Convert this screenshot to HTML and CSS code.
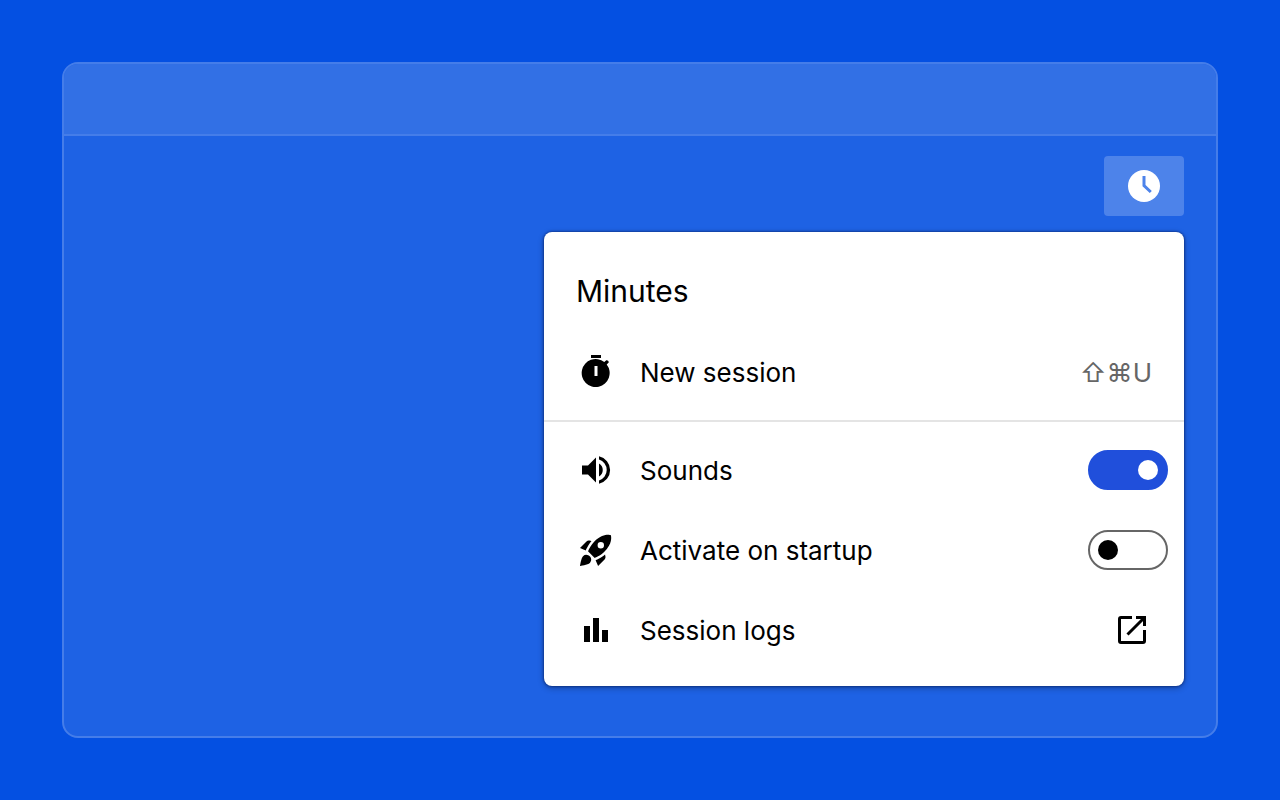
FILE: index.html
```html
<!DOCTYPE html>
<html lang="en">
<head>
<meta charset="utf-8">
<meta name="viewport" content="width=device-width, initial-scale=1">
<title>Minutes</title>
<link rel="stylesheet" href="styles.css">
</head>
<body>
<main class="window">
  <header class="titlebar"></header>
  <div class="content">
    <button class="tray" type="button" aria-label="Minutes">
      <svg class="tray-icon" viewBox="0 0 32 32" aria-hidden="true"><circle cx="16" cy="16" r="16" fill="#fff"/><path d="M16 6v9.500l6.800 6.500" fill="none" stroke="#4d83ea" stroke-width="3"/></svg>
    </button>
    <section class="popup">
      <h1 class="title">Minutes</h1>
      <button class="row" type="button">
        <svg class="icon" viewBox="0 0 40 40" aria-hidden="true"><path d="M15 3h10v3H15zM30.700 12.400l2-2a2 2 0 0 0-2.400-2.200l-2 1.800A14 14 0 1 0 30.700 12.400zM21.500 24h-3V14h3z"/></svg>
        <span class="label">New session</span>
        <kbd class="keys">⇧⌘U</kbd>
      </button>
      <hr class="divider">
      <label class="row">
        <svg class="icon" viewBox="0 0 40 40" aria-hidden="true"><path d="M6 15.500v9h6l8 8v-25l-8 8zM23 13.500v13a7.500 7.500 0 0 0 0-13zM23 6.300v3.200a11 11 0 0 1 0 21v3.200a14 14 0 0 0 0-27.400z"/></svg>
        <span class="label">Sounds</span>
        <input class="toggle" type="checkbox" role="switch" checked>
      </label>
      <label class="row">
        <svg class="icon" viewBox="-0.500 -0.500 25 25" aria-hidden="true"><path d="M9.190 6.350c-2.040 2.290-3.440 5.580-3.570 5.890L2 10.690l4.050-4.050c.47-.47 1.150-.68 1.810-.55l1.330.26zM11.170 17s3.740-1.550 5.890-3.700c5.400-5.400 4.500-9.620 4.210-10.570-.95-.3-5.170-1.190-10.570 4.210C8.550 9.090 7 12.830 7 12.830L11.170 17zm6.480-2.190c-2.290 2.040-5.580 3.440-5.890 3.570L13.310 22l4.050-4.050c.47-.47.68-1.150.55-1.810l-.26-1.330zM9 18c0 .83-.34 1.580-.88 2.120C6.940 21.300 2 22 2 22s.7-4.940 1.880-6.120A3 3 0 0 1 9 18zm4-9a2 2 0 1 1 4 0 2 2 0 0 1-4 0z"/></svg>
        <span class="label">Activate on startup</span>
        <input class="toggle" type="checkbox" role="switch">
      </label>
      <button class="row" type="button">
        <svg class="icon" viewBox="0 0 40 40" aria-hidden="true"><path d="M8 16h6v16H8zM17 8h6v24h-6zM26 20h6v12h-6z"/></svg>
        <span class="label">Session logs</span>
        <svg class="icon open" viewBox="0 0 40 40" aria-hidden="true"><path d="M20 7.500H9A1.500 1.500 0 0 0 7.500 9v22A1.500 1.500 0 0 0 9 32.500h22a1.500 1.500 0 0 0 1.500-1.500V20M24 7.500h8.500V16M32.500 7.500L15.500 24.500" fill="none" stroke="#000" stroke-width="3"/></svg>
      </button>
    </section>
  </div>
</main>
</body>
</html>
```
FILE: styles.css
```css
* {
  box-sizing: border-box;
}

body {
  margin: 0;
  min-height: 100vh;
  padding: 62px;
  display: flex;
  background: #0450e2;
  color: #000;
  font-family: Inter, "Liberation Sans", sans-serif;
}

.window {
  flex: 1;
  display: flex;
  flex-direction: column;
  border: 2px solid #457de9;
  border-radius: 16px;
  background: #1e62e4;
  overflow: hidden;
}

.titlebar {
  height: 72px;
  background: #3270e5;
  border-bottom: 2px solid #457de9;
}

.content {
  display: flex;
  flex-direction: column;
  align-items: flex-end;
  gap: 16px;
  padding: 20px 32px;
}

.tray {
  display: flex;
  align-items: center;
  justify-content: center;
  width: 80px;
  height: 60px;
  padding: 0;
  border: 0;
  border-radius: 4px;
  background: #4d83ea;
}

.tray-icon {
  width: 32px;
  height: 32px;
}

.popup {
  width: 100%;
  max-width: 640px;
  padding: 20px 0 16px;
  border-radius: 8px;
  background: #fff;
  box-shadow: 0 0 2px 1px rgba(0, 20, 80, 0.4), 0 2px 6px rgba(0, 0, 0, 0.3);
}

.title {
  margin: 0;
  padding: 19px 32px 21px;
  font-size: 30px;
  font-weight: 400;
  line-height: 40px;
}

.row {
  display: flex;
  align-items: center;
  width: 100%;
  height: 80px;
  padding: 0 16px 0 32px;
  border: 0;
  background: none;
  color: inherit;
  font: inherit;
  font-size: 26px;
  line-height: 40px;
  text-align: left;
}

.icon {
  width: 40px;
  height: 40px;
  flex: none;
}

.label {
  flex: 1;
  padding: 2px 0 0 24px;
}

.keys {
  margin-right: 16px;
  padding-top: 2px;
  color: #666;
  font: inherit;
}

.open {
  margin-right: 16px;
}

.divider {
  margin: 8px 0;
  border: 0;
  border-top: 2px solid #e4e4e4;
}

.toggle {
  appearance: none;
  display: flex;
  align-items: center;
  width: 80px;
  height: 40px;
  margin: 0;
  padding: 0 8px;
  border: 2px solid #666;
  border-radius: 20px;
}

.toggle::before {
  content: "";
  width: 20px;
  height: 20px;
  border-radius: 50%;
  background: #000;
}

.toggle:checked {
  justify-content: flex-end;
  border-color: #204fdb;
  background: #204fdb;
}

.toggle:checked::before {
  background: #fff;
}
```
